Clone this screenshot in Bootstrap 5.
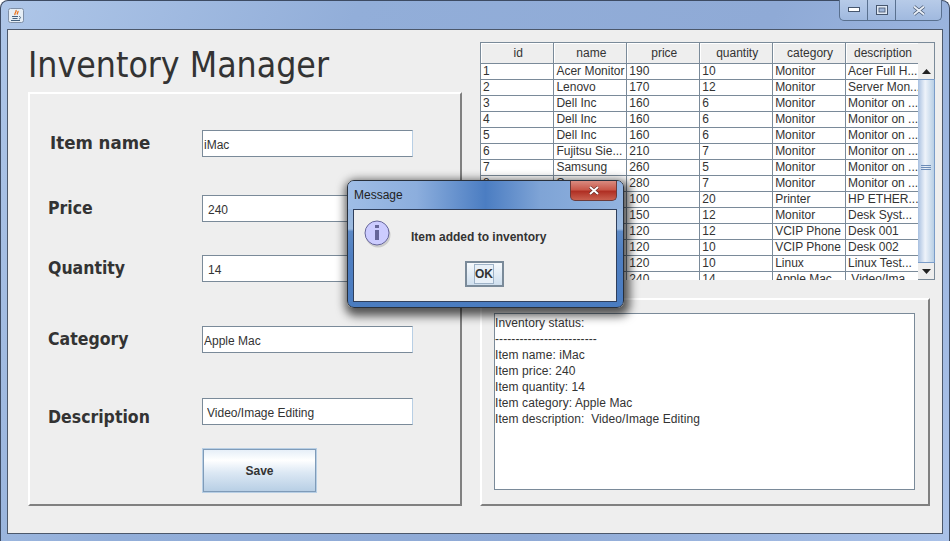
<!DOCTYPE html>
<html lang="en">
<head>
    <meta charset="UTF-8">
    <meta name="viewport" content="width=device-width, initial-scale=1.0">
    <title>Inventory Manager</title>
    <link href="https://cdn.jsdelivr.net/npm/bootstrap@5.3.0/dist/css/bootstrap.min.css" rel="stylesheet">
    <style>
        html, body { height: 100%; }
        body {
            background: #fff;
            color: #333;
            font-family: "Liberation Sans", Arial, sans-serif;
            font-size: 12px;
            overflow: hidden;
        }
        .app-window {
            position: relative;
            width: 950px;
            height: 541px;
            padding: 0 6px 6px 6px;
            background: linear-gradient(115deg, #aec6e8 0%, #92aed9 30%, #8faad6 65%, #a9c1e8 100%);
            border: 1px solid #3d4b63;
            border-bottom: 0;
            border-radius: 8px 8px 0 0;
        }
        .title-strip { height: 28px; padding: 7px 0 0 1px; }
        .java-btn { width: 16px; height: 15px; display: block; }
        .win-controls {
            position: absolute;
            top: -1px;
            right: 7px;
            height: 21px;
            width: 103px;
            border: 1px solid #59708f;
            border-top: 0;
            border-radius: 0 0 5px 5px;
            background: linear-gradient(180deg, #b7cbe8, #a0b9df);
        }
        .win-btn { border-right: 1px solid #59708f; width: 28px; }
        .win-btn:last-child { border-right: 0; flex: 1; }
        .client-area {
            height: 505px;
            background: #eee;
            border: 1px solid #4c586b;
            display: grid;
            grid-template-columns: 472px 1fr;
        }
        .left-side { padding: 0 0 0 20px; }
        .app-heading {
            font-family: "DejaVu Sans Condensed", "DejaVu Sans", sans-serif;
            font-stretch: condensed;
            font-size: 35.300px;
            font-weight: 400;
            line-height: 50px;
            margin: 10px 0 0;
            color: #333;
            height: 52px;
            white-space: nowrap;
        }
        .etched {
            border: 2px solid;
            border-color: #fff #808080 #808080 #fff;
        }
        .form-panel {
            width: 434px;
            height: 414px;
            padding-left: 18px;
        }
        .field-row { height: 27px; }
        .fr-name { margin-top: 36px; }
        .fr-price { margin-top: 38px; }
        .fr-qty { margin-top: 33px; }
        .fr-cat { margin-top: 44px; }
        .fr-desc { margin-top: 45px; }
        .field-label {
            width: 154px;
            font-family: "DejaVu Sans Condensed", "DejaVu Sans", sans-serif;
            font-stretch: condensed;
            font-weight: 700;
            font-size: 17.500px;
            line-height: 27px;
            color: #333;
        }
        .field-label.shift-right { padding-left: 2px; font-size: 18.500px; line-height: 25px; }
        .field-label.shift-down { padding-top: 6px; }
        .field-input {
            width: 211px;
            height: 27px;
            padding: 3px 1px 1px;
            font-size: 12px;
            color: #333;
            background: #fff;
            border: 1px solid;
            border-color: #7a8a99 #b8cfe5 #7a8a99 #7a8a99;
            border-radius: 0;
            outline: 0;
        }
        .field-input.pad-num { padding-left: 5px; }
        .field-input.pad-desc { padding-left: 4px; }
        .save-btn {
            display: block;
            margin: 23px 0 0 154px;
            width: 115px;
            height: 45px;
            font-size: 12px;
            font-weight: 700;
            color: #333;
            border: 2px solid #7f9bb8;
            outline: 1px solid #b8cfe5;
            outline-offset: -1px;
            background: linear-gradient(180deg, #e6eff8 0%, #fff 25%, #dce8f4 55%, #b8cfe5 100%);
        }
        .right-side { padding: 12px 0 0 0; }
        .grid-pane { width: 455px; height: 238px; overflow: hidden; }
        .grid-scroll { width: 438px; height: 238px; overflow: hidden; border-left: 1px solid #7a8a99; }
        .inv-grid { table-layout: fixed; width: 438px; border-collapse: collapse; color: #333; }
        .inv-grid th, .inv-grid td {
            padding: 0 2px;
            height: 16px;
            line-height: 15px;
            font-size: 12px;
            font-weight: 400;
            border: 1px solid #7a8a99;
            border-left: 0;
            white-space: nowrap;
            overflow: hidden;
            background: #fff;
            color: #333;
            box-shadow: none;
        }
        .inv-grid th {
            height: 21px;
            padding: 1px 2px 0 4px;
            text-align: center;
            background: #eee;
            box-shadow: inset 1px 1px 0 #fff;
        }
        .scroll-track { width: 17px; height: 238px; }
        .scroll-corner { height: 21px; background: #eee; border: 1px solid #7a8a99; border-left: 0; border-bottom: 0; }
        .scroll-arrow {
            height: 16px;
            background: #eee;
            border-right: 1px solid #7a8a99;
        }
        .scroll-thumb {
            flex: 1;
            padding-bottom: 7px;
            background: linear-gradient(90deg, #a8c0e0, #eef3fa 45%, #b8cfe5);
            border: 1px solid #7a9cc8;
            border-left: 0;
        }
        .scroll-down { border-bottom: 1px solid #7a8a99; height: 17px; }
        .status-panel {
            width: 450px;
            height: 208px;
            margin-top: 18px;
            padding: 13px 13px 0 12px;
        }
        .status-box {
            width: 421px;
            height: 177px;
            padding: 1px 0 0 0;
            background: #fff;
            border: 1px solid #7a8a99;
            line-height: 16px;
            font-size: 12px;
            letter-spacing: .08px;
            color: #333;
            white-space: pre;
        }
        .msg-dialog {
            position: absolute;
            left: 346px;
            top: 179px;
            width: 277px;
            height: 128px;
            padding: 0 6px 6px 5px;
            border: 1px solid #28303c;
            border-radius: 7px;
            background: linear-gradient(180deg, #8fb0dc 0%, #9dbbe0 38%, #5d8ac6 40%, #4f7fc2 60%, #4a7cc0 100%);
            box-shadow: 2px 4px 10px 4px rgba(0, 0, 0, .65);
        }
        .msg-title {
            height: 28px;
            margin: 0 -6px 0 -5px;
            padding: 5px 0 0 6px;
            font-size: 12px;
            color: #222;
            border-radius: 6px 6px 0 0;
            background: linear-gradient(90deg, #9fbde6 0%, #8caedd 25%, #4b7dc2 50%, #7fa4d6 70%, #92b3df 100%);
        }
        .msg-close {
            position: absolute;
            top: 0;
            right: 6px;
            width: 47px;
            height: 20px;
            border: 1px solid #6b3b3b;
            border-top: 0;
            border-radius: 0 0 5px 5px;
            background: linear-gradient(180deg, #d98b80 0%, #c9584a 45%, #b03024 55%, #c9604f 100%);
        }
        .msg-body {
            height: 93px;
            background: #eee;
            border: 1px solid #2f3f5c;
            padding: 10px 0 0 10px;
        }
        .msg-text { font-weight: 700; font-size: 12px; line-height: 15px; margin: 10px 0 0 19px; color: #333; }
        .msg-ok {
            display: block;
            margin: 13px auto 0;
            position: relative;
            left: -6px;
            width: 39px;
            height: 26px;
            padding: 0;
            font-size: 12px;
            font-weight: 700;
            color: #333;
            border: 2px solid #7a8a99;
            background: linear-gradient(180deg, #f6f9fc, #cfdfee);
        }
        .msg-ok span { border: 1px solid #9fb3c8; padding: 2px 0; background: #e8f0f8; }
    </style>
</head>
<body>
    <div class="app-window">
        <div class="title-strip">
            <svg class="java-btn" viewBox="0 0 16 15">
                <rect x=".5" y=".5" width="15" height="14" rx="2" fill="#e6eef6" stroke="#7f8fa6"/>
                <path d="M8 2c1 2-2 3-1 5M10 3c.5 1.500-1.500 2.500-.5 3.500" fill="none" stroke="#e8701a" stroke-width="1.300"/>
                <path d="M4 8.500h6M4.500 10.500h5M3 12.500h9" stroke="#44617f"/>
                <path d="M11 8.500c2 0 2 2 0 2.500" fill="none" stroke="#44617f"/>
            </svg>
        </div>
        <div class="win-controls d-flex">
            <div class="win-btn d-flex align-items-center justify-content-center">
                <svg width="12" height="6" viewBox="0 0 12 6"><rect x=".5" y=".5" width="11" height="4" fill="#fff" stroke="#46566e"/></svg>
            </div>
            <div class="win-btn d-flex align-items-center justify-content-center">
                <svg width="12" height="10" viewBox="0 0 12 10"><rect x=".5" y=".5" width="11" height="9" fill="#dfe8f4" stroke="#46566e"/><rect x="3" y="3" width="6" height="4" fill="#9fb6da" stroke="#46566e" stroke-width=".8"/></svg>
            </div>
            <div class="win-btn d-flex align-items-center justify-content-center">
                <svg width="14" height="11" viewBox="0 0 14 11"><path d="M2 1.500l10 8M12 1.500l-10 8" stroke="#46566e" stroke-width="3.400"/><path d="M2 1.500l10 8M12 1.500l-10 8" stroke="#e8eef7" stroke-width="2"/></svg>
            </div>
        </div>

        <div class="client-area">
            <div class="left-side">
                <h1 class="app-heading">Inventory Manager</h1>
                <div class="etched form-panel">
                    <div class="field-row fr-name d-flex"><label class="field-label shift-right">Item name</label><input class="field-input" value="iMac"></div>
                    <div class="field-row fr-price d-flex"><label class="field-label">Price</label><input class="field-input pad-num" value="240"></div>
                    <div class="field-row fr-qty d-flex"><label class="field-label">Quantity</label><input class="field-input pad-num" value="14"></div>
                    <div class="field-row fr-cat d-flex"><label class="field-label">Category</label><input class="field-input" value="Apple Mac"></div>
                    <div class="field-row fr-desc d-flex"><label class="field-label shift-down">Description</label><input class="field-input pad-desc" value="Video/Image Editing"></div>
                    <button class="save-btn">Save</button>
                </div>
            </div>

            <div class="right-side">
                <div class="grid-pane d-flex">
                    <div class="grid-scroll">
                        <table class="inv-grid">
                            <thead>
                                <tr><th>id</th><th>name</th><th>price</th><th>quantity</th><th>category</th><th>description</th></tr>
                            </thead>
                            <tbody>
                                <tr><td>1</td><td>Acer Monitor</td><td>190</td><td>10</td><td>Monitor</td><td>Acer Full H...</td></tr>
                                <tr><td>2</td><td>Lenovo</td><td>170</td><td>12</td><td>Monitor</td><td>Server Mon...</td></tr>
                                <tr><td>3</td><td>Dell Inc</td><td>160</td><td>6</td><td>Monitor</td><td>Monitor on ...</td></tr>
                                <tr><td>4</td><td>Dell Inc</td><td>160</td><td>6</td><td>Monitor</td><td>Monitor on ...</td></tr>
                                <tr><td>5</td><td>Dell Inc</td><td>160</td><td>6</td><td>Monitor</td><td>Monitor on ...</td></tr>
                                <tr><td>6</td><td>Fujitsu Sie...</td><td>210</td><td>7</td><td>Monitor</td><td>Monitor on ...</td></tr>
                                <tr><td>7</td><td>Samsung</td><td>260</td><td>5</td><td>Monitor</td><td>Monitor on ...</td></tr>
                                <tr><td>8</td><td>Samsung</td><td>280</td><td>7</td><td>Monitor</td><td>Monitor on ...</td></tr>
                                <tr><td>9</td><td>HP</td><td>100</td><td>20</td><td>Printer</td><td>HP ETHER...</td></tr>
                                <tr><td>10</td><td>Dell</td><td>150</td><td>12</td><td>Monitor</td><td>Desk Syst...</td></tr>
                                <tr><td>11</td><td>Cisco</td><td>120</td><td>12</td><td>VCIP Phone</td><td>Desk 001</td></tr>
                                <tr><td>12</td><td>Cisco</td><td>120</td><td>10</td><td>VCIP Phone</td><td>Desk 002</td></tr>
                                <tr><td>13</td><td>Ubuntu</td><td>120</td><td>10</td><td>Linux</td><td>Linux Test...</td></tr>
                                <tr><td>14</td><td>iMac</td><td>240</td><td>14</td><td>Apple Mac</td><td>&nbsp;Video/Ima...</td></tr>
                            </tbody>
                        </table>
                    </div>
                    <div class="scroll-track d-flex flex-column">
                        <div class="scroll-corner"></div>
                        <div class="scroll-arrow d-flex align-items-center justify-content-center">
                            <svg width="9" height="5" viewBox="0 0 9 5"><path d="M4.500 0L9 5H0z" fill="#222"/></svg>
                        </div>
                        <div class="scroll-thumb d-flex align-items-center justify-content-center">
                            <svg width="10" height="5" viewBox="0 0 10 5"><path d="M0 .5h10M0 2.500h10M0 4.500h10" stroke="#6c8cb8"/></svg>
                        </div>
                        <div class="scroll-arrow scroll-down d-flex align-items-center justify-content-center">
                            <svg width="9" height="5" viewBox="0 0 9 5"><path d="M0 0h9L4.500 5z" fill="#222"/></svg>
                        </div>
                    </div>
                </div>
                <div class="etched status-panel">
                    <div class="status-box">Inventory status:
-------------------------
Item name: iMac
Item price: 240
Item quantity: 14
Item category: Apple Mac
Item description:  Video/Image Editing</div>
                </div>
            </div>
        </div>

        <div class="msg-dialog">
            <div class="msg-title">Message</div>
            <div class="msg-close d-flex align-items-center justify-content-center">
                <svg width="12" height="9" viewBox="0 0 12 9"><path d="M2 1l8 7M10 1l-8 7" stroke="#5a2420" stroke-width="3"/><path d="M2 1l8 7M10 1l-8 7" stroke="#fff" stroke-width="2"/></svg>
            </div>
            <div class="msg-body">
                <div class="d-flex">
                    <svg width="28" height="28" viewBox="0 0 28 28">
                        <circle cx="14" cy="15" r="12.500" fill="#999" opacity=".4"/>
                        <circle cx="13" cy="13" r="12" fill="#ccf" stroke="#666699"/>
                        <rect x="11" y="5" width="4" height="3" fill="#666699"/>
                        <rect x="11" y="10" width="4" height="10" fill="#666699"/>
                    </svg>
                    <div class="msg-text">Item added to inventory</div>
                </div>
                <button class="msg-ok"><span>OK</span></button>
            </div>
        </div>
    </div>
    <script src="https://cdn.jsdelivr.net/npm/bootstrap@5.3.0/dist/js/bootstrap.bundle.min.js"></script>
</body>
</html>
